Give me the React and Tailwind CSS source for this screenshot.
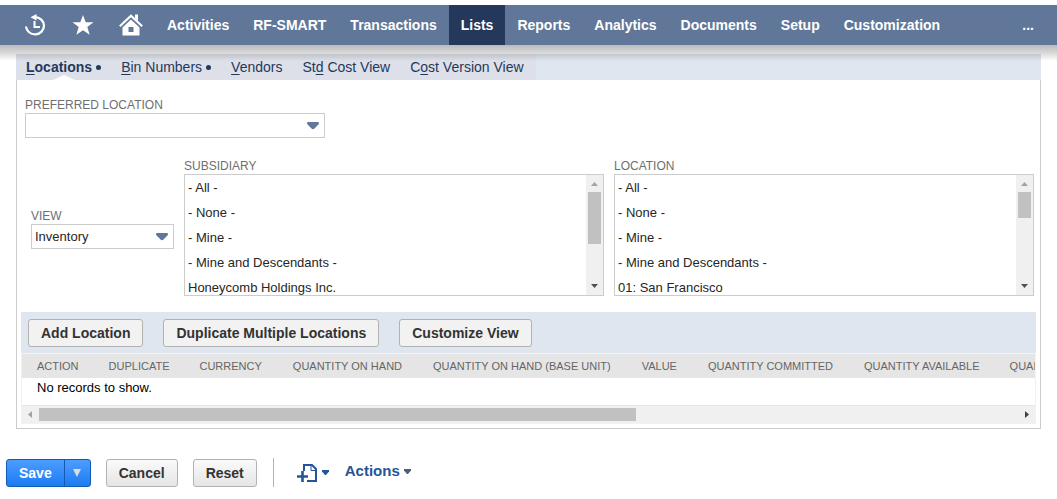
const NAV = ['Activities', 'RF-SMART', 'Transactions', 'Lists', 'Reports', 'Analytics', 'Documents', 'Setup', 'Customization'];

const TABS = [
  { before: '', key: 'L', after: 'ocations', dot: true, active: true },
  { before: '', key: 'B', after: 'in Numbers', dot: true },
  { before: '', key: 'V', after: 'endors' },
  { before: 'St', key: 'd', after: ' Cost View' },
  { before: 'C', key: 'o', after: 'st Version View' },
];

const COLUMNS = [
  { name: 'ACTION' },
  { name: 'DUPLICATE' },
  { name: 'CURRENCY', wide: true },
  { name: 'QUANTITY ON HAND', wide: true },
  { name: 'QUANTITY ON HAND (BASE UNIT)', wide: true },
  { name: 'VALUE', wide: true },
  { name: 'QUANTITY COMMITTED', wide: true },
  { name: 'QUANTITY AVAILABLE' },
  { name: 'QUANTITY ON ORDER' },
];

const BASE_OPTIONS = ['- All -', '- None -', '- Mine -', '- Mine and Descendants -'];

function HistoryIcon() {
  return (
    <svg viewBox="0 0 22 22" className="size-[22px]" fill="none" stroke="#fff" aria-hidden="true">
      <path d="M2 12.500A9 8.600 0 1 0 11 3.200" strokeWidth="2.200" />
      <path d="M6.500 3.200 12.500 0v6.400Z" fill="#fff" stroke="none" />
      <path d="M10.500 7v6H16" strokeWidth="2" />
    </svg>
  );
}

function StarIcon() {
  return (
    <svg viewBox="0 0 22 20" className="h-5 w-[22px]" fill="#fff" aria-hidden="true">
      <path d="m11 0 2.700 7.300H21.500l-6.200 4.700 2.400 7.700L11 15.200l-6.700 4.500L6.700 12 .5 7.300h7.800Z" />
    </svg>
  );
}

function HomeIcon() {
  return (
    <svg viewBox="0 0 24 22" className="h-[22px] w-6" aria-hidden="true">
      <path d="M.8 12.300 12 1.800l11.200 10.500" fill="none" stroke="#fff" strokeWidth="2.200" />
      <path d="M16 .5h3v6.500l-3-2.800Z" fill="#fff" />
      <path d="M12 5.500 20.500 13.500V21.500h-17v-8ZM9.500 13v5h5v-5Z" fill="#fff" fillRule="evenodd" />
    </svg>
  );
}

function DropArrow() {
  return (
    <svg viewBox="0 0 12 8" className="pointer-events-none absolute top-[9px] right-[6px] h-2 w-3" aria-hidden="true">
      <path d="M1 0h10q1 0 1 1 0 1-.800 1.700L7.500 6.600q-1.500 1.400-3 0L.8 2.700Q0 2 0 1q0-1 1-1Z" fill="#607799" />
    </svg>
  );
}

function DropField({ id, label, children, className }) {
  return (
    <div className={className}>
      <label htmlFor={id} className="block pt-px text-xs leading-4 text-[#6f6f6f]">{label}</label>
      <div className="relative">
        <select id={id} className="block h-[25px] w-full appearance-none border border-[#ccc] bg-white pt-0.5 pr-6 pl-[3px] text-[13px] text-[#262626]">
          {children}
        </select>
        <DropArrow />
      </div>
    </div>
  );
}

function ListField({ id, label, options, thumb }) {
  return (
    <div className="min-w-0 flex-1">
      <label htmlFor={id} className="block pt-px text-xs leading-4 text-[#6f6f6f]">{label}</label>
      <div className="flex h-[122px] border border-[#ccc]">
        <select
          id={id}
          multiple
          className="block h-full min-w-0 flex-1 overflow-y-auto bg-white text-[13px] text-[#262626] outline-none [scrollbar-width:none]"
        >
          {options.map((o) => (
            <option key={o} className="h-[25px] px-[3px] pt-[5px] pb-0">{o}</option>
          ))}
        </select>
        <div className="flex w-[17px] flex-col items-center justify-between bg-[#f0f0f0]" aria-hidden="true">
          <div className="flex flex-col items-center">
            <svg viewBox="0 0 7 4" className="mt-[7px] mb-[6px] h-1 w-[7px]"><path d="M3.500 0 7 4H0Z" fill="#a3a3a3" /></svg>
            <div className={`w-[13px] bg-[#c1c1c1] ${thumb}`} />
          </div>
          <svg viewBox="0 0 7 4" className="mb-[7px] h-1 w-[7px]"><path d="M0 0h7L3.500 4Z" fill="#505050" /></svg>
        </div>
      </div>
    </div>
  );
}

function ToolButton({ children }) {
  return (
    <button type="button" className="h-7 rounded-[3px] border border-[#b2b2b2] bg-[#f2f2f2] px-3 text-sm font-bold whitespace-nowrap text-[#333]">
      {children}
    </button>
  );
}

function FormButton({ children }) {
  return (
    <button type="button" className="h-7 rounded-[3px] border border-[#b2b2b2] bg-linear-to-b from-[#fafafa] to-[#e5e5e5] px-3 text-sm font-bold text-[#333]">
      {children}
    </button>
  );
}

export default function App() {
  return (
    <div className="overflow-x-hidden bg-white pt-[5px] font-['Liberation_Sans',Arial,sans-serif]">
      <header className="relative bg-[#607799]">
        <nav className="flex h-10 items-center pl-6 text-sm font-bold text-white">
          <a href="#recent" aria-label="Recent records" className="mr-[26px]"><HistoryIcon /></a>
          <a href="#shortcuts" aria-label="Shortcuts" className="mr-[25px]"><StarIcon /></a>
          <a href="#home" aria-label="Home" className="mr-3"><HomeIcon /></a>
          {NAV.map((n) => (
            <a key={n} href="#menu" className={`flex h-full items-center px-3 ${n === 'Lists' ? 'bg-[#24385b]' : ''}`}>{n}</a>
          ))}
          <button type="button" aria-label="More menus" className="mr-3 ml-auto px-[11px]">...</button>
        </nav>
        <div className="pointer-events-none absolute top-full left-0 h-4 w-full bg-linear-to-b from-black/27 via-black/15 to-transparent" />
      </header>

      <main>
        <div className="mx-4 mt-[9px] bg-[#dfe6ef]">
          <nav className="flex h-[26px] w-fit items-center gap-5 bg-[#dde0e8] pr-3 pl-[10px] text-sm text-[#24385b]">
            {TABS.map((t) => (
              <a key={t.after} href="#tab" className={`relative flex h-full items-center whitespace-pre ${t.active ? 'font-bold' : ''}`}>
                <span>
                  {t.before}<span className="underline underline-offset-2">{t.key}</span>{t.after}
                </span>
                {t.dot && <span className="ml-1 size-[5px] rounded-full bg-[#24385b]" />}
                {t.active && (
                  <svg viewBox="0 0 22 5" className="absolute bottom-0 left-1/2 h-[5px] w-[22px] -translate-x-1/2" aria-hidden="true">
                    <path d="M0 5 11 0l11 5Z" fill="#fff" />
                  </svg>
                )}
              </a>
            ))}
          </nav>
        </div>

        <section className="mx-4 border-x border-b border-[#ccc] px-1 pb-1">
          <DropField id="preferred" label="PREFERRED LOCATION" className="ml-1 w-[300px] pt-4">
            <option> </option>
          </DropField>

          <div className="mt-[19px] flex items-center gap-[10px] pr-[2px] pl-[10px]">
            <DropField id="view" label="VIEW" className="w-[143px] shrink-0 pt-0.5">
              <option>Inventory</option>
            </DropField>
            <ListField id="subsidiary" label="SUBSIDIARY" options={[...BASE_OPTIONS, 'Honeycomb Holdings Inc.']} thumb="h-[52px]" />
            <ListField id="location" label="LOCATION" options={[...BASE_OPTIONS, '01: San Francisco']} thumb="h-[26px]" />
          </div>

          <div className="mt-4 flex h-[41px] items-center gap-5 bg-[#dfe6ef] px-[7px]">
            <ToolButton>Add Location</ToolButton>
            <ToolButton>Duplicate Multiple Locations</ToolButton>
            <ToolButton>Customize View</ToolButton>
          </div>
          <div className="border border-[#f2f2f2]">
            <div className="overflow-x-auto [scrollbar-width:none]">
              <table className="border-collapse text-left">
                <thead>
                  <tr className="h-6 bg-[#e5e5e5] text-[11px] text-[#666]">
                    {COLUMNS.map((c) => (
                      <th key={c.name} className={`pl-[15px] font-normal whitespace-nowrap ${c.wide ? 'pr-4' : 'pr-[15px]'}`}>{c.name}</th>
                    ))}
                  </tr>
                </thead>
                <tbody>
                  <tr className="h-[27px] align-top text-[13px] text-black">
                    <td colSpan={COLUMNS.length} className="px-[15px] leading-5">No records to show.</td>
                  </tr>
                </tbody>
              </table>
            </div>
            <div className="flex h-[18px] items-center border-t border-[#e8e8e8] bg-[#f0f0f0] px-[6px]" aria-hidden="true">
              <svg viewBox="0 0 4 7" className="mr-[7px] h-[7px] w-1"><path d="M4 0v7L0 3.500Z" fill="#a3a3a3" /></svg>
              <div className="flex-1"><div className="h-[13px] w-[61%] bg-[#c1c1c1]" /></div>
              <svg viewBox="0 0 4 7" className="ml-[7px] h-[7px] w-1"><path d="M0 0v7l4-3.500Z" fill="#404040" /></svg>
            </div>
          </div>
        </section>

        <footer className="mt-[29px] flex items-center pl-[6px]">
          <div className="mr-[15px] flex h-7 overflow-hidden rounded-[3px] border border-[#125ab2] bg-linear-to-b from-[#4c9dff] to-[#187bf2] text-sm font-bold text-white">
            <button type="button" className="px-3">Save</button>
            <button type="button" aria-label="More save options" className="flex w-[26px] items-center justify-center border-l border-[#125ab2]">
              <svg viewBox="0 0 8 8" className="size-2" aria-hidden="true"><path d="M0 0h8L4 8Z" fill="#dcdcdc" /></svg>
            </button>
          </div>
          <div className="flex gap-[15px]">
            <FormButton>Cancel</FormButton>
            <FormButton>Reset</FormButton>
          </div>
          <div className="ml-4 h-[29px] w-px bg-[#b2b2b2]" />
          <button type="button" aria-label="Create new" className="ml-[23px] flex items-center gap-1">
            <svg viewBox="0 0 21 18" className="h-[18px] w-[21px]" fill="none" stroke="#255599" aria-hidden="true">
              <path d="M7 7V1h8l4 4v12h-9" strokeWidth="2" />
              <path d="M14 1v5.500h5" strokeWidth="1" />
              <path d="M5.500 7v11M0 12.500h11" strokeWidth="2.600" />
            </svg>
            <svg viewBox="0 0 7 5" className="h-[5px] w-[7px]" aria-hidden="true"><path d="M0 0h7v1.500L4 5H3L0 1.500Z" fill="#255599" /></svg>
          </button>
          <button type="button" className="ml-4 flex items-center gap-1 pb-0.5 text-[15px] font-bold text-[#255599]">
            Actions
            <svg viewBox="0 0 7 5" className="h-[5px] w-[7px]" aria-hidden="true"><path d="M0 0h7v1.500L4 5H3L0 1.500Z" fill="#4d5f79" /></svg>
          </button>
        </footer>
      </main>
    </div>
  );
}
